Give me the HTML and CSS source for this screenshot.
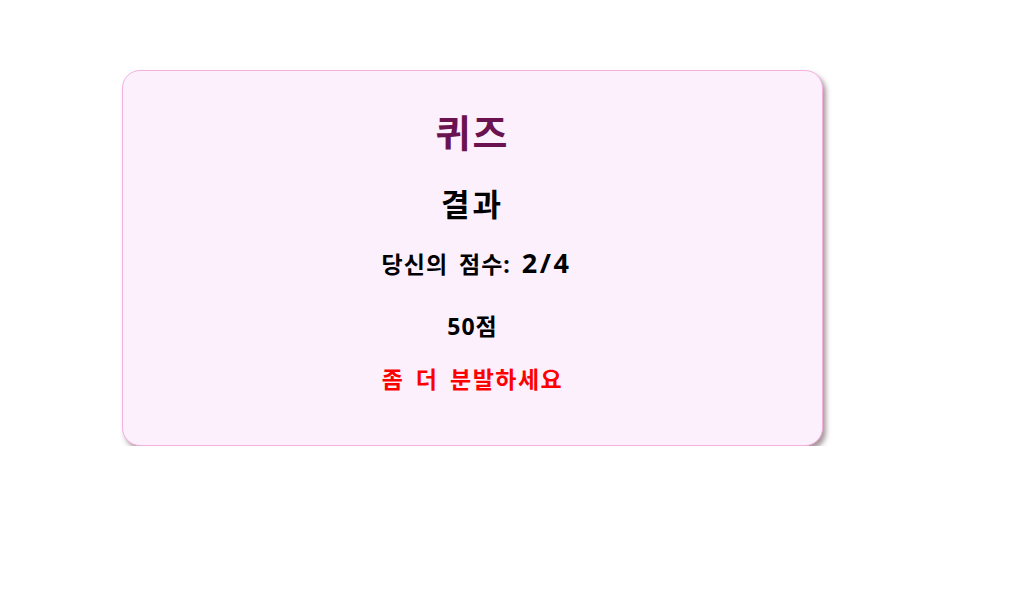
FILE: index.html
```html
<!DOCTYPE html>
<html lang="ko">
<head>
<meta charset="utf-8">
<link rel="stylesheet" href="styles.css">
</head>
<body>
<div class="page">
  <div class="card">
    <h1 class="title">퀴즈</h1>
    <h2 class="subtitle">결과</h2>
    <p class="score">당신의 점수: <span class="frac">2/4</span></p>
    <p class="points">50점</p>
    <p class="message">좀 더 분발하세요</p>
  </div>
</div>
</body>
</html>
```
FILE: styles.css
```css
html, body {
  margin: 0;
  padding: 0;
  background: #ffffff;
}
body {
  font-family: "Noto Sans", "Noto Sans CJK KR", sans-serif;
}
.page {
  padding: 70px 0 0 122px;
}
.card {
  box-sizing: border-box;
  width: 701px;
  height: 376px;
  background: #fcf0fc;
  border: 1px solid #f4b0e0;
  border-radius: 18px;
  box-shadow: 3px 4px 5px rgba(80, 50, 60, 0.5);
  display: flex;
  flex-direction: column;
  align-items: center;
  padding-top: 36px;
}
.title {
  margin: 0;
  font-size: 38px;
  line-height: 50px;
  letter-spacing: 2px;
  font-weight: 700;
  color: #6b1350;
}
.subtitle {
  margin: 27px 0 0;
  font-size: 31px;
  line-height: 40px;
  letter-spacing: 3px;
  font-weight: 700;
  color: #000;
}
.score {
  margin: 23px 0 0;
  font-size: 23px;
  line-height: 32px;
  letter-spacing: 1px;
  word-spacing: 4px;
  font-weight: 700;
  color: #000;
  padding-left: 8px;
}
.frac {
  font-size: 27px;
  letter-spacing: 2.5px;
  word-spacing: 0;
}
.points {
  margin: 30px 0 0;
  font-size: 23px;
  line-height: 32px;
  letter-spacing: 1px;
  font-weight: 700;
  color: #000;
}
.message {
  margin: 21px 0 0;
  font-size: 23px;
  line-height: 32px;
  letter-spacing: 1.5px;
  word-spacing: 4px;
  font-weight: 700;
  color: #ff0000;
}
```
